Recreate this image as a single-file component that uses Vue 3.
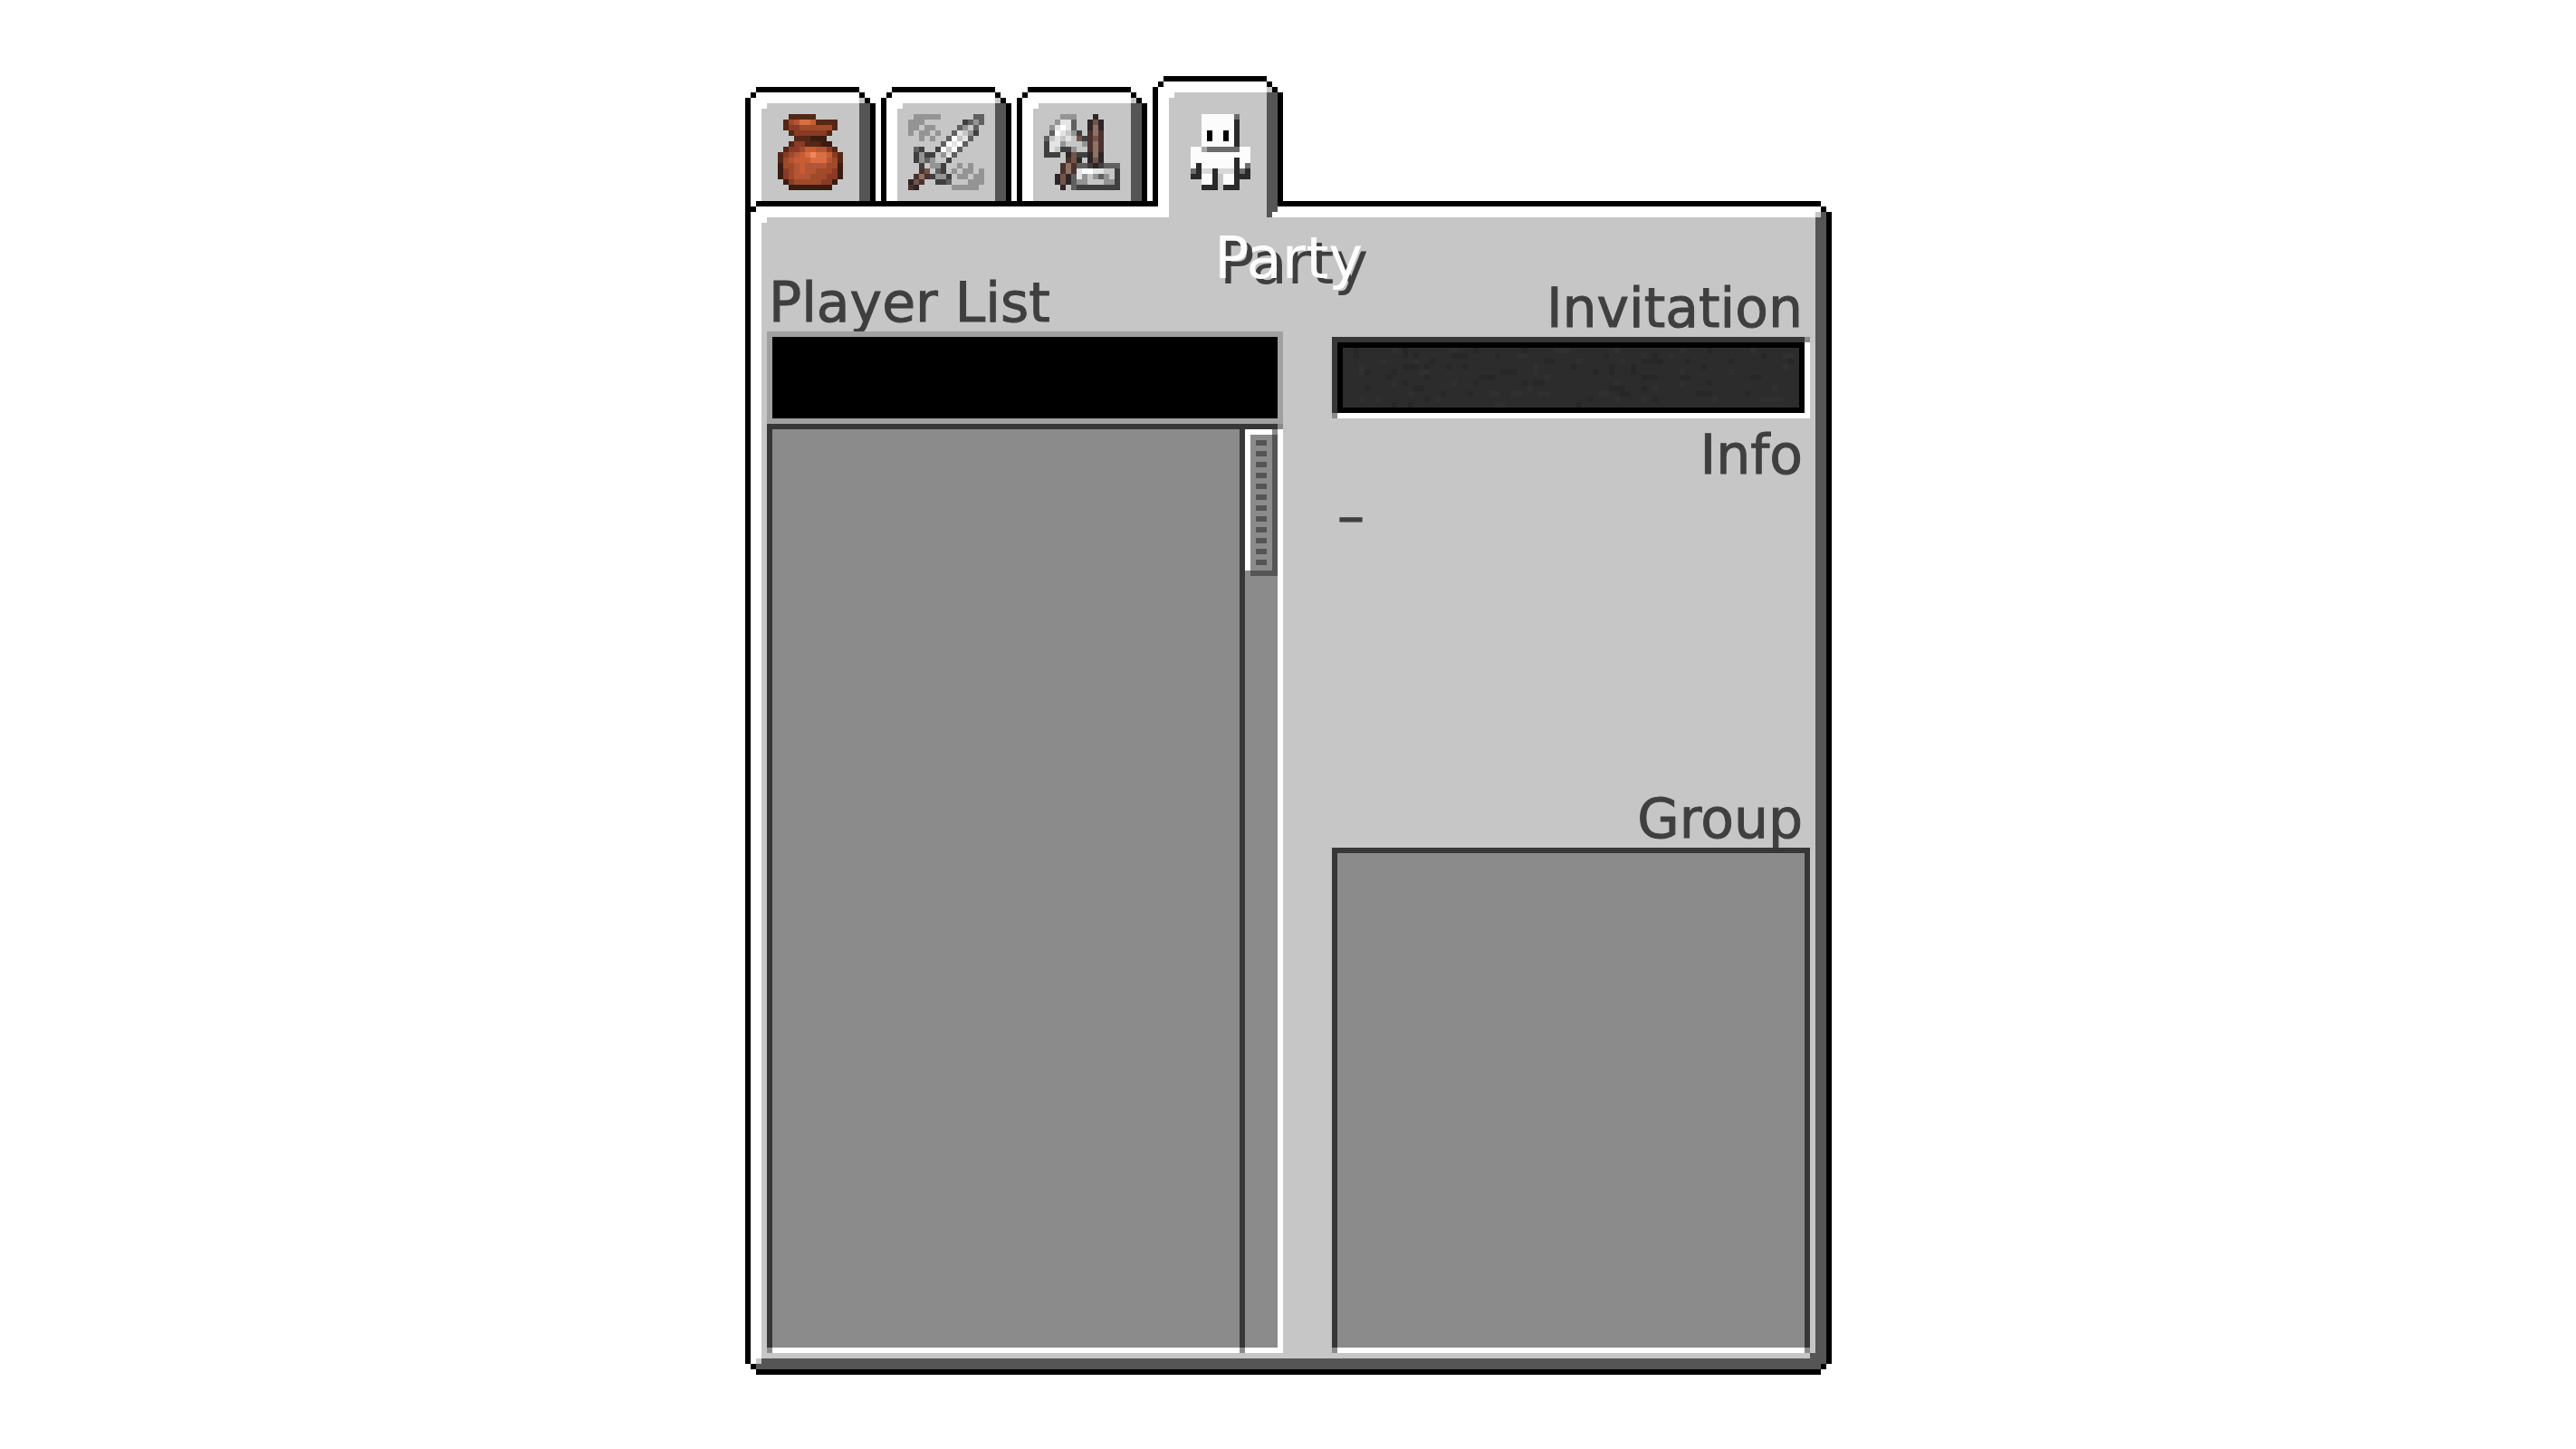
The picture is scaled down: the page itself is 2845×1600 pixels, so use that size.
<script setup>
import { ref } from 'vue'

const palette = {
  // pouch
  D: '#542716', E: '#3b1c10', B: '#8a3a26', O: '#a04a29',
  M: '#b45636', C: '#c85c33', L: '#d96e44', H: '#f0875f',
  // steel
  k: '#3f3f3f', d: '#606060', m: '#949494', l: '#c6c6c6', v: '#e4e4e4', w: '#ffffff',
  // wood
  q: '#2e2526', p: '#4b322f', r: '#72544a', s: '#8f7262',
  // figure
  W: '#fcfcfc', K: '#000000', x: '#2a2a2a', y: '#6c6c6c', z: '#a8a8a8', u: '#d8d8d8'
}

const sprites = {
  inventory: [
    '................',
    '....DDDDD.......',
    '...DOMLLCDDDD...',
    '...DBBOOOOOOD...',
    '....DBBBBBBD....',
    '.....DDDEEE.....',
    '....DBBDDDEE....',
    '...DBBOCCMMBD...',
    '..DBOMCLHLLCBD..',
    '..DOMCCCLLLMOD..',
    '..EOOMCMMMMOOE..',
    '..EBOMCMMOOOBE..',
    '..EBOMMMOOOBBE..',
    '...EBOOOOOBBE...',
    '....EEEEEEEE....',
    '................'
  ],
  combat: [
    '................',
    '..mmmmm......dd.',
    '.mmm.......kdmd.',
    '.mm.mm....dmld..',
    '.m.mm.m..dvlmk..',
    '...m.m..dwlvd...',
    '.......dwvwd....',
    '..dk..kwlwd.....',
    '..kmkklmvd......',
    '..kmdmllk.......',
    '...klmmk..m.m...',
    '...prldk.m.mm.m.',
    '..pspkmmk.mm.mm.',
    '.qrp..kkd...mmm.',
    '.pq......mmmmm..',
    '................'
  ],
  skills: [
    '................',
    '....mmm...q.....',
    '...mvvd..qrq....',
    '..mvwvd..qsq....',
    '..dwvlmk.psp....',
    '.dlvlvlrkprp....',
    '.kvvmlllmpsp....',
    '.kvlkkmllpsp....',
    '.kkk.qrkkqsq....',
    '.....prqlqrq....',
    '....pspddkqkddd.',
    '....pspvwwvvllk.',
    '...qrqdvmlmdmlk.',
    '...qrqdmmlllmmk.',
    '....q.dkkkkkkkk.',
    '................'
  ],
  party: [
    '................',
    '.....WWWWWWy....',
    '.....WWWWWWx....',
    '.....WWWWWWx....',
    '.....WKWWKWx....',
    '.....WKWWKWx....',
    '.....WWWWWWx....',
    '...WWzyyyyyyWW..',
    '...WWWWWWWWWWW..',
    '...WWWWWWWWxWW..',
    '...WxWWWWWWxWy..',
    '...yxuuxuuuxyx..',
    '...xxWWx.WWxxx..',
    '.....WWx.WWx....',
    '.....xxx.xxx....',
    '................'
  ]
}

// Merge equal neighbours of a row into one rectangle.
function toRuns(rows) {
  const runs = []
  rows.forEach((row, y) => {
    let x = 0
    while (x < row.length) {
      const key = row[x]
      let end = x + 1
      while (end < row.length && row[end] === key) end++
      if (key !== '.') runs.push({ x, y, w: end - x, fill: palette[key] })
      x = end
    }
  })
  return runs
}

const tabs = [
  { id: 'inventory', label: 'Inventory' },
  { id: 'combat', label: 'Combat' },
  { id: 'skills', label: 'Skills' },
  { id: 'party', label: 'Party' }
].map(tab => ({ ...tab, runs: toRuns(sprites[tab.id]) }))

const active = ref('party')
const search = ref('')

// Speckles of the stone surface: columns per row.
const darkSpecks = [
  [2, 11, 24, 33, 67],
  [2, 11, 13, 20, 21, 22, 28, 48, 57, 77],
  [16, 37, 38, 55, 56, 57, 58, 63, 71, 82],
  [11, 12, 13, 15, 19, 22, 42, 49, 53, 66],
  [4, 9, 29, 30, 31, 46, 49, 53],
  [8, 15, 25, 26, 27, 55, 56, 57, 62, 63, 75, 76],
  [11, 24, 33, 35, 36, 67],
  [4, 13, 14, 49, 50, 51, 55],
  [18, 23, 51, 52, 65, 66, 67, 74],
  [15, 45, 57],
  [9, 12, 43]
]
const lightSpecks = [
  [9, 20, 39, 40, 41, 50, 62, 75],
  [32, 33, 55, 60, 81, 82],
  [7, 13, 43, 51],
  [3, 35, 81],
  [3, 14, 15, 35, 62, 71],
  [37],
  [9, 20, 50, 62],
  [34, 57, 79],
  [12, 27, 28, 31, 32, 36, 37, 47, 48],
  [3, 6, 17, 50, 55, 68, 77, 78, 79, 80],
  [28, 29]
]
const speckPath = rows =>
  rows.map((cols, y) => cols.map(x => `M${x} ${y}h1v1h-1z`).join('')).join('')
const darkPath = speckPath(darkSpecks)
const lightPath = speckPath(lightSpecks)
</script>

<template>
  <main class="page">
    <div class="window">
      <div class="tabs" role="tablist" aria-label="Menu">
        <button
          v-for="tab in tabs"
          :key="tab.id"
          type="button"
          role="tab"
          class="tab"
          :class="{ active: tab.id === active }"
          :aria-selected="tab.id === active"
          :aria-label="tab.label"
          @click="active = tab.id"
        >
          <svg class="sprite" viewBox="0 0 16 16" shape-rendering="crispEdges" aria-hidden="true">
            <rect
              v-for="(run, i) in tab.runs"
              :key="i"
              :x="run.x"
              :y="run.y"
              :width="run.w"
              height="1"
              :fill="run.fill"
            />
          </svg>
        </button>
      </div>

      <section class="panel">
        <h1 class="title">Party</h1>
        <div class="columns">
          <div class="column left">
            <label class="caption" for="player-search">Player List</label>
            <input id="player-search" v-model="search" class="search" type="text" autocomplete="off" />
            <div class="players">
              <div class="well player-rows"></div>
              <div class="track">
                <div class="thumb"><div class="grip"></div></div>
              </div>
            </div>
          </div>

          <div class="column right">
            <h2 id="invitation" class="caption">Invitation</h2>
            <div class="slot">
              <button type="button" class="invite" aria-labelledby="invitation" disabled>
                <svg
                  class="stone"
                  viewBox="0 0 84 11"
                  preserveAspectRatio="xMidYMid slice"
                  shape-rendering="crispEdges"
                  aria-hidden="true"
                >
                  <path :d="darkPath" fill="#272727" />
                  <path :d="lightPath" fill="#303030" />
                </svg>
              </button>
            </div>
            <section class="info">
              <h2 class="caption">Info</h2>
              <p class="info-text">–</p>
            </section>
            <section class="group">
              <h2 class="caption">Group</h2>
              <div class="well members"></div>
            </section>
          </div>
        </div>
      </section>
    </div>
  </main>
</template>

<style>
body {
  margin: 0;
  background: #fff;
}
</style>

<style scoped>
.page {
  box-sizing: border-box;
  min-height: 100vh;
  padding: 84px 24px 82px 25px;
  display: flex;
  justify-content: center;
  font-family: "DejaVu Sans", sans-serif;
  font-size: 60px;
  line-height: 44px;
  color: #3f3f3f;
}

.page * {
  box-sizing: border-box;
}

.window {
  width: 100%;
  max-width: 1200px;
  display: flex;
  flex-direction: column;
}

.tabs {
  display: flex;
  align-items: flex-end;
  gap: 6px;
  margin-bottom: -18px;
}

.tab {
  width: 144px;
  height: 144px;
  margin: 0;
  padding: 0;
  display: flex;
  align-items: flex-start;
  background: none;
  border-style: solid;
  border-color: transparent;
  border-width: 24px 24px 18px;
  border-image: url("data:image/svg+xml,%3Csvg xmlns='http://www.w3.org/2000/svg' width='54' height='54' viewBox='0 0 9 9' shape-rendering='crispEdges'%3E%3Cpath fill='%23c6c6c6' d='M3 3h3v6H3zM6 2h1v1H6z'/%3E%3Cpath fill='%23fff' d='M2 1h4v1H2zM1 2h5v1H1zM1 3h2v6H1zM3 3h1v1H3zM0 7h1v2H0zM8 7h1v2H8zM7 8h1v1H7z'/%3E%3Cpath fill='%23555' d='M6 3h1v6H6zM7 3h1v5H7z'/%3E%3Cpath d='M2 0h4v1H2zM1 1h1v1H1zM6 1h1v1H6zM7 2h1v1H7zM0 2h1v5H0zM8 3h1v4H8z'/%3E%3C/svg%3E") 24 24 18 24 fill;
  cursor: pointer;
}

.tab.active {
  position: relative;
  z-index: 2;
  height: 156px;
  padding-top: 12px;
}

.sprite {
  display: block;
  flex: none;
  width: 96px;
  height: 96px;
}

.panel {
  position: relative;
  z-index: 1;
  flex: 1;
  display: flex;
  flex-direction: column;
  border: 24px solid transparent;
  border-image: url("data:image/svg+xml,%3Csvg xmlns='http://www.w3.org/2000/svg' width='54' height='54' viewBox='0 0 9 9' shape-rendering='crispEdges'%3E%3Cpath fill='%23c6c6c6' d='M2 2h5v5H2z'/%3E%3Cpath fill='%23fff' d='M2 1h5v1H2zM1 2h5v1H1zM1 3h2v3H1zM1 6h1v1H1zM3 3h1v1H3z'/%3E%3Cpath fill='%23555' d='M6 3h1v4H6zM7 2h1v5H7zM3 6h4v1H3zM2 7h5v1H2zM5 5h1v1H5z'/%3E%3Cpath d='M2 0h5v1H2zM0 0h1v7H0zM1 1h1v1H1zM7 1h1v1H7zM8 2h1v5H8zM1 7h1v1H1zM7 7h1v1H7zM2 8h5v1H2z'/%3E%3C/svg%3E") 24 fill;
}

.title {
  margin: 0;
  padding-top: 12px;
  font-size: 64px;
  font-weight: 400;
  line-height: 54px;
  text-align: center;
  color: #fcfcfc;
  text-shadow: 6px 6px 0 #3e3e3e;
}

.columns {
  flex: 1;
  display: grid;
  grid-template-columns: 95fr 88fr;
  gap: 54px;
}

.column {
  min-width: 0;
  display: flex;
  flex-direction: column;
}

.caption {
  display: block;
  margin: 0 0 10px;
  font-size: 60px;
  font-weight: 400;
  line-height: 44px;
  -webkit-text-stroke: 1px #3f3f3f;
}

.left .caption {
  padding-left: 2px;
}

.right {
  padding-top: 6px;
}

.right .caption {
  padding-right: 8px;
  text-align: right;
}

.search {
  width: 100%;
  height: 102px;
  margin: 0;
  padding: 0 18px;
  border: 6px solid #a0a0a0;
  border-radius: 0;
  outline: none;
  background: #000;
  color: #e0e0e0;
  font: inherit;
}

.players {
  flex: 1;
  display: flex;
}

.well {
  border: 6px solid transparent;
  border-image: url("data:image/svg+xml,%3Csvg xmlns='http://www.w3.org/2000/svg' width='18' height='18' viewBox='0 0 3 3' shape-rendering='crispEdges'%3E%3Cpath fill='%238b8b8b' d='M0 0h3v3H0z'/%3E%3Cpath fill='%23373737' d='M0 0h3v1H0zM0 1h1v1H0zM2 1h1v1H2z'/%3E%3Cpath fill='%23fff' d='M1 2h1v1H1z'/%3E%3C/svg%3E") 6 fill;
}

.player-rows {
  flex: 1;
}

.track {
  width: 42px;
  border-style: solid;
  border-color: transparent;
  border-width: 6px 6px 6px 0;
  border-image: url("data:image/svg+xml,%3Csvg xmlns='http://www.w3.org/2000/svg' width='18' height='18' viewBox='0 0 3 3' shape-rendering='crispEdges'%3E%3Cpath fill='%238b8b8b' d='M0 0h3v3H0z'/%3E%3Cpath fill='%23373737' d='M0 0h2v1H0z'/%3E%3Cpath fill='%23fff' d='M0 2h3v1H0zM2 1h1v1H2z'/%3E%3C/svg%3E") 6 6 6 0 fill;
}

.thumb {
  height: 162px;
  padding: 6px;
  border: 6px solid transparent;
  border-image: url("data:image/svg+xml,%3Csvg xmlns='http://www.w3.org/2000/svg' width='18' height='18' viewBox='0 0 3 3' shape-rendering='crispEdges'%3E%3Cpath fill='%238b8b8b' d='M0 0h3v3H0z'/%3E%3Cpath fill='%23fff' d='M0 0h2v1H0zM0 1h1v1H0z'/%3E%3Cpath fill='%23555' d='M2 1h1v2H2zM1 2h1v1H1z'/%3E%3C/svg%3E") 6 fill;
}

.grip {
  height: 100%;
  background: repeating-linear-gradient(#555 0 6px, #8b8b8b 6px 12px);
}

.slot {
  border: 6px solid transparent;
  border-image: url("data:image/svg+xml,%3Csvg xmlns='http://www.w3.org/2000/svg' width='18' height='18' viewBox='0 0 3 3' shape-rendering='crispEdges'%3E%3Cpath fill='%238b8b8b' d='M0 0h3v3H0z'/%3E%3Cpath fill='%23373737' d='M0 0h2v1H0zM0 1h1v1H0z'/%3E%3Cpath fill='%23fff' d='M2 1h1v2H2zM1 2h1v1H1z'/%3E%3C/svg%3E") 6 fill;
}

.invite {
  display: block;
  width: 100%;
  height: 78px;
  margin: 0;
  padding: 0;
  border: 6px solid #000;
  border-radius: 0;
  background: #2c2c2c;
}

.stone {
  display: block;
  width: 100%;
  height: 66px;
}

.info {
  min-height: 420px;
  padding-top: 18px;
}

.info .caption {
  margin-bottom: 24px;
}

.info-text {
  margin: 0;
  padding-left: 6px;
  -webkit-text-stroke: 1px #3f3f3f;
}

.group {
  flex: 1;
  display: flex;
  flex-direction: column;
}

.members {
  flex: 1;
}
</style>
